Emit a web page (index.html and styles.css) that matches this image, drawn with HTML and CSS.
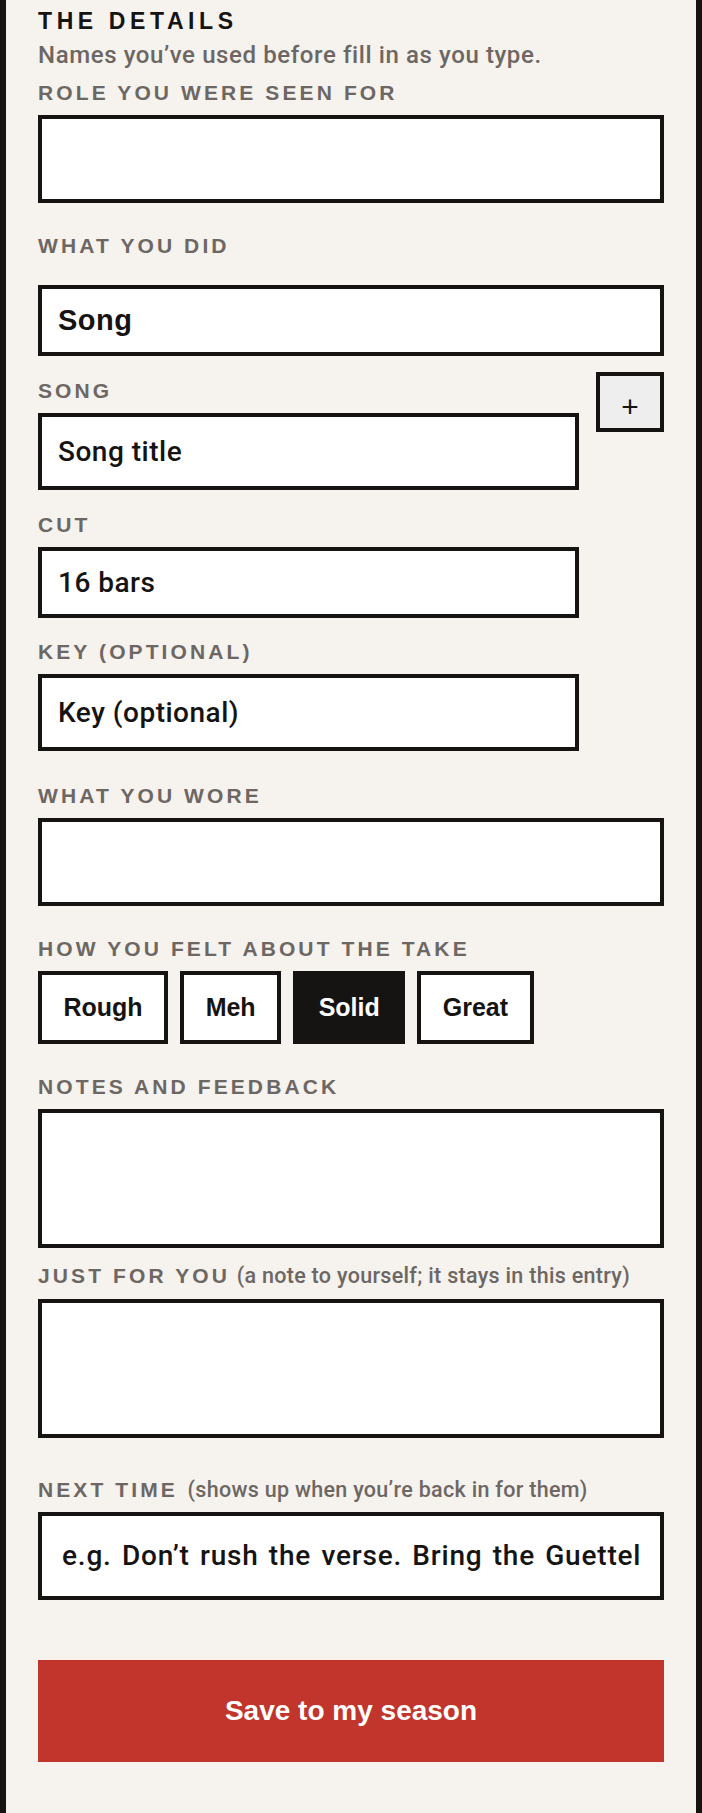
FILE: index.html
```html
<!DOCTYPE html>
<html lang="en">
<head>
<meta charset="utf-8">
<title>The details</title>
<link rel="stylesheet" href="styles.css">
</head>
<body>
<div class="panel">
  <h2 class="title">THE DETAILS</h2>
  <p class="sub">Names you’ve used before fill in as you type.</p>

  <div class="field f-role">
    <label class="label" for="role">ROLE YOU WERE SEEN FOR</label>
    <input id="role" class="input" type="text">
  </div>

  <div class="field f-did">
    <label class="label" for="did">WHAT YOU DID</label>
    <select id="did" class="input select select-bold"><option>Song</option></select>
  </div>

  <div class="song-row">
    <div class="song-fields">
      <div class="sfield">
        <label class="label" for="song">SONG</label>
        <input id="song" class="input input-mid" type="text" placeholder="Song title">
      </div>
      <div class="sfield">
        <label class="label" for="cut">CUT</label>
        <select id="cut" class="input select"><option>16 bars</option></select>
      </div>
      <div class="sfield">
        <label class="label" for="key">KEY (OPTIONAL)</label>
        <input id="key" class="input input-mid" type="text" placeholder="Key (optional)">
      </div>
    </div>
    <button class="add-btn" type="button">+</button>
  </div>

  <div class="field f-wore">
    <label class="label" for="wore">WHAT YOU WORE</label>
    <input id="wore" class="input" type="text">
  </div>

  <div class="field">
    <span class="label">HOW YOU FELT ABOUT THE TAKE</span>
    <div class="takes">
      <button class="take" type="button">Rough</button>
      <button class="take" type="button">Meh</button>
      <button class="take on" type="button">Solid</button>
      <button class="take" type="button">Great</button>
    </div>
  </div>

  <div class="field">
    <label class="label" for="notes">NOTES AND FEEDBACK</label>
    <textarea id="notes" class="input area"></textarea>
  </div>

  <div class="field f-just">
    <label class="label" for="just">JUST FOR YOU<span class="hint"> (a note to yourself; it stays in this entry)</span></label>
    <textarea id="just" class="input area"></textarea>
  </div>

  <div class="field f-next">
    <label class="label" for="next">NEXT TIME<span class="hint"> (shows up when you’re back in for them)</span></label>
    <input id="next" class="input next-input" type="text" placeholder="e.g. Don’t rush the verse. Bring the Guettel">
  </div>

  <button class="save" type="button">Save to my season</button>
</div>
</body>
</html>
```

FILE: styles.css
```css
* {
  box-sizing: border-box;
}

html,
body {
  margin: 0;
  padding: 0;
}

body {
  background: #161313;
}

.panel {
  margin: 0 6px;
  min-height: 1813px;
  background: #f6f2ee;
  padding: 9.2px 32px 50px;
}

.title {
  margin: 0;
  font: 700 23px/24px "Liberation Sans", Arial, sans-serif;
  letter-spacing: 4.6px;
  color: #161313;
}

.sub {
  margin: 8.3px 0 0;
  font: 500 24px/28px Roboto, "Liberation Sans", sans-serif;
  letter-spacing: 0.6px;
  color: #6d6764;
}

.field {
  display: flex;
  flex-direction: column;
  margin-top: 33px;
}

.f-role {
  margin-top: 13.5px;
}

.f-wore {
  margin-top: 35px;
}

.f-just {
  margin-top: 18.2px;
}

.f-just .label {
  margin-bottom: 13px;
}

.f-next {
  margin-top: 42.4px;
}

.f-next .label {
  margin-bottom: 11.5px;
}

.label {
  display: block;
  margin-bottom: 12px;
  font: 700 21px/20px "Liberation Sans", Arial, sans-serif;
  letter-spacing: 3.1px;
  color: #6d6764;
}

.f-did .label {
  margin-bottom: 29px;
}

.hint {
  margin-left: 1px;
  font: 500 21.5px/20px Roboto, "Liberation Sans", sans-serif;
  letter-spacing: 0.3px;
  color: #6d6764;
}

.f-next .hint {
  margin-left: 4px;
}

.input {
  display: block;
  width: 100%;
  height: 88px;
  margin: 0;
  padding: 0 16px;
  border: 4px solid #161313;
  border-radius: 0;
  background: #fff;
  outline: none;
  font: 500 28px Roboto, "Liberation Sans", sans-serif;
  letter-spacing: 0.5px;
  color: #161313;
}

.input::placeholder {
  color: #161313;
  opacity: 1;
}

.input-mid {
  height: 77px;
}

.select {
  height: 71px;
  -webkit-appearance: none;
  appearance: none;
}

.select-bold {
  font: 700 29px "Liberation Sans", Arial, sans-serif;
  letter-spacing: 0.5px;
}

.song-row {
  display: flex;
  align-items: flex-start;
  gap: 17px;
  margin-top: 16.3px;
}

.song-fields {
  flex: 1;
  padding-top: 9px;
}

.sfield + .sfield {
  margin-top: 24.5px;
}

.add-btn {
  display: flex;
  align-items: center;
  justify-content: center;
  width: 68px;
  height: 60px;
  padding: 9px 0 0;
  border: 4px solid #161313;
  border-radius: 0;
  background: #eeeeee;
  font: 400 30px/1 "Liberation Sans", Arial, sans-serif;
  color: #161313;
}

.takes {
  display: flex;
  gap: 12px;
}

.take {
  height: 73px;
  padding: 0 21.5px;
  border: 4px solid #161313;
  border-radius: 0;
  background: #fff;
  font: 700 25px "Liberation Sans", Arial, sans-serif;
  color: #161313;
}

.take.on {
  background: #161313;
  color: #fff;
}

.area {
  height: 138.6px;
  resize: none;
}

.next-input {
  padding: 0 19px 0 20px;
  letter-spacing: 0.8px;
  word-spacing: 2.5px;
}

.save {
  display: block;
  width: 100%;
  height: 101.7px;
  margin-top: 60.7px;
  border: 0;
  border-radius: 0;
  background: #c1352c;
  font: 700 28px "Liberation Sans", Arial, sans-serif;
  color: #fff;
}
```
